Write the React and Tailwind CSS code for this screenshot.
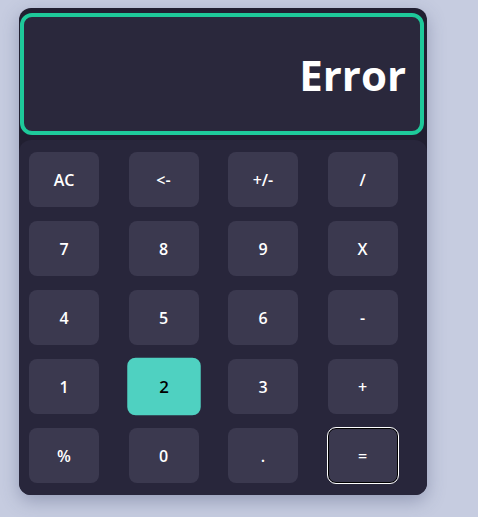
const keys = [
  ['AC', '<-', '+/-', '/'],
  ['7', '8', '9', 'X'],
  ['4', '5', '6', '-'],
  ['1', '2', '3', '+'],
  ['%', '0', '.', '='],
]

function Key({ label }) {
  const hovered = label === '2'
  const focused = label === '='
  let cls = 'bg-[#3b394f] text-white'
  if (hovered) cls = 'bg-[#4fd1c1] text-black scale-[1.05]'
  if (focused) cls = 'bg-[#3b394f] text-white border border-black outline outline-[1.5px] outline-white'
  return (
    <button
      className={`h-[55px] w-[70px] rounded-lg text-[16px] font-semibold flex items-center justify-center ${cls}`}
    >
      {label}
    </button>
  )
}

export default function App() {
  return (
    <div
      className="min-h-[517px] w-full bg-[#c6cce0] pl-[19px] pt-[8px]"
      style={{ fontFamily: '"Open Sans", "Noto Sans", sans-serif' }}
    >
      <div className="w-[408px] rounded-xl bg-[#211f31] shadow-[0_6px_18px_rgba(60,70,110,0.35)]">
        <div className="pt-[5px] pl-px pr-[3px]">
          <div className="h-[122px] rounded-xl border-4 border-[#1ec99a] bg-[#2a283c] flex items-center justify-end pr-[14px]">
            <span className="text-[42px] font-bold text-white leading-none mt-[2px]">Error</span>
          </div>
        </div>
        <div className="mt-[5px] rounded-xl bg-[#28263b] pl-[10px] pt-[12px] pb-[12px]">
          <div className="grid grid-cols-4 gap-y-[14px]">
            {keys.flat().map((k) => (
              <div key={k}>
                <Key label={k} />
              </div>
            ))}
          </div>
        </div>
      </div>
    </div>
  )
}
